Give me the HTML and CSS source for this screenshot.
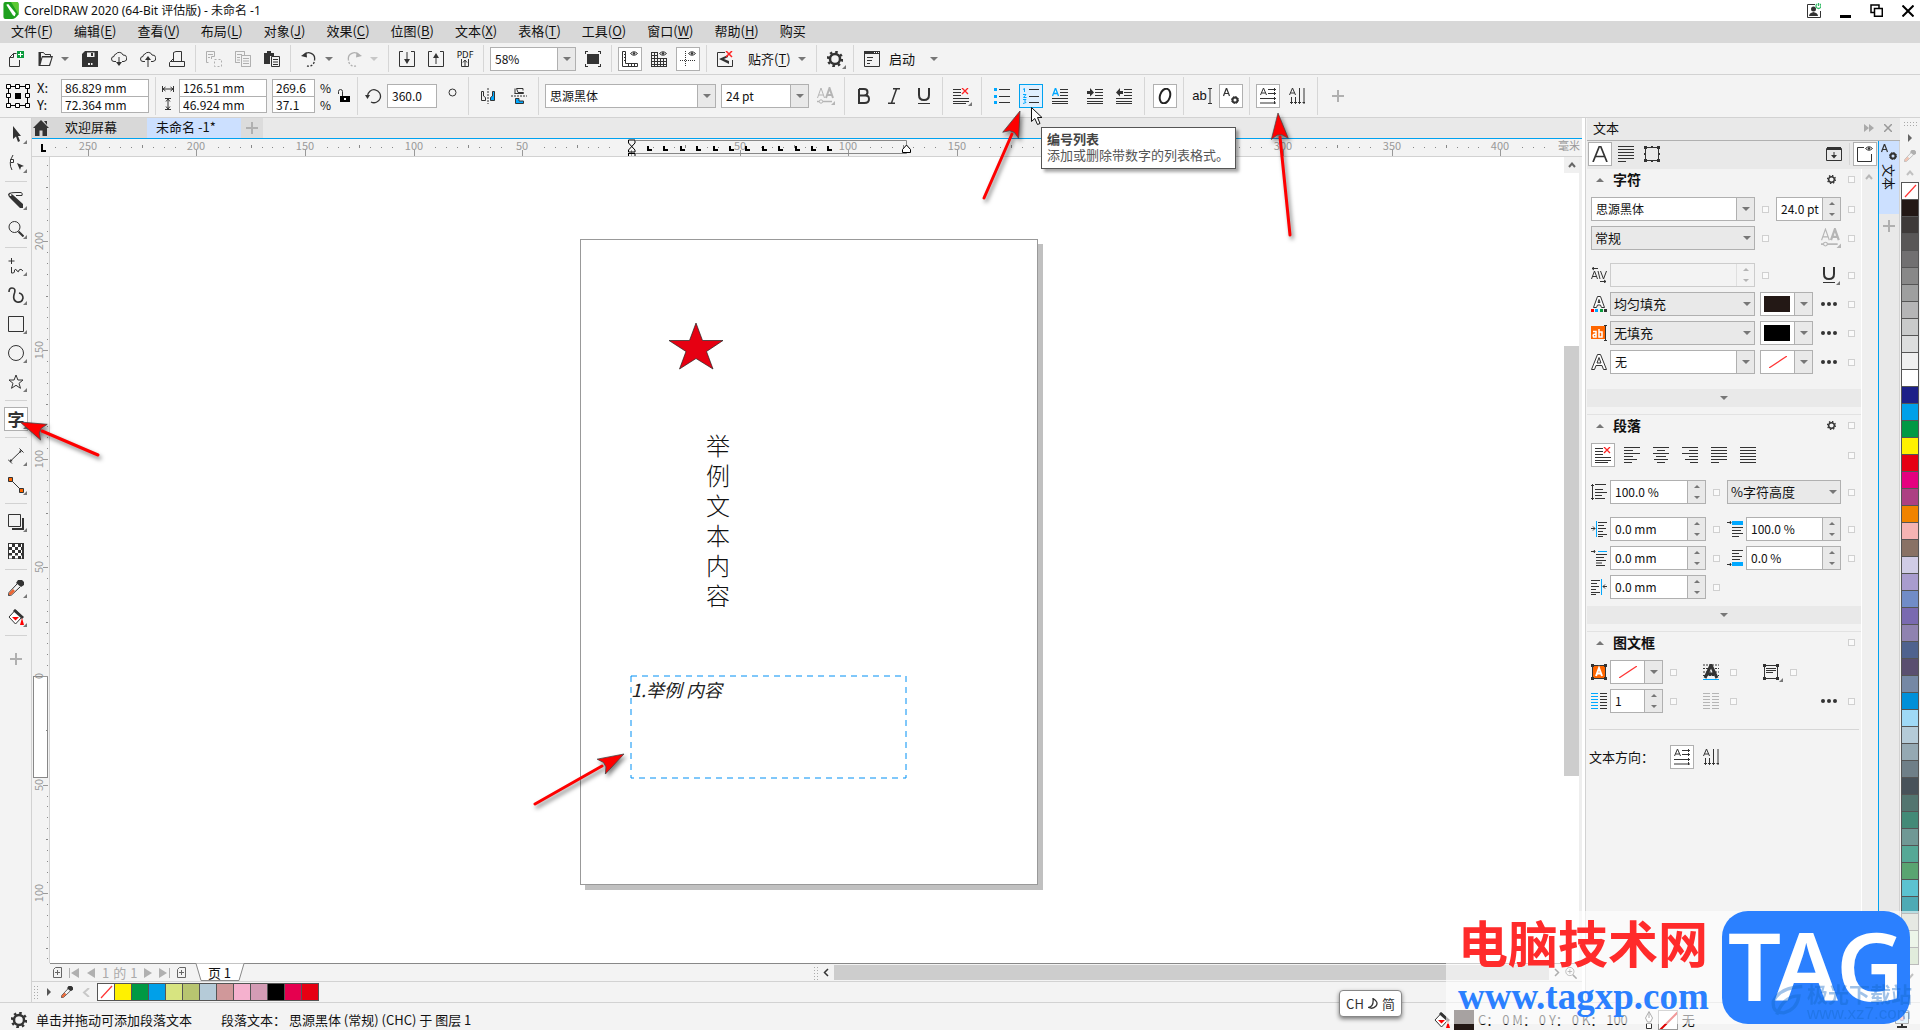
FILE: index.html
```html
<!DOCTYPE html>
<html lang="zh-CN">
<head>
<meta charset="utf-8">
<title>CorelDRAW 2020 (64-Bit 评估版) - 未命名 -1</title>
<link rel="stylesheet" href="styles.css">
</head>
<body>
<svg class="defs" aria-hidden="true">
  <symbol id="new" viewBox="0 0 16 16"><path class="s" d="M8.500 2.500H5.500L1.500 6.500V15.500H11.500V9M5.500 2.500V6.500H1.500"/><path fill="#0a9b3d" d="M9 0h7v7H9z"/><path stroke="#fff" d="M12.500 1v5M10 3.500h5"/></symbol>
  <symbol id="open" viewBox="0 0 16 16"><path class="s" d="M2.500 13V1.500H6.500L8 3.500H13.500V6"/><path class="f" d="M5 5h11l-3 10H1.500z"/><path fill="#f3f3f3" d="M5.500 6.500h9L12 14H3.500z"/><path class="f" d="M1.500 1H4v9l-2.500 5z"/></symbol>
  <symbol id="save" viewBox="0 0 16 16"><path class="f" d="M3 0h13v16H0V3z"/><path fill="#f3f3f3" d="M5 1.500h7.500V6H5zM6 12h4.500v2H6z"/><path class="f" d="M9 2h2v3H9zM8 12h1v2H8z"/></symbol>
  <symbol id="cloud" viewBox="0 0 16 16"><path class="s" d="M5 10.500H3A2.500 2.500 0 0 1 3 5.500 A2.500 2.500 0 0 1 5 3 A4 4 0 0 1 12 4 A3.200 3.200 0 0 1 13 10.500H11"/></symbol>
  <symbol id="print" viewBox="0 0 16 16"><path class="s" d="M4.500 10.500V1.500L7 .5H12.500V10.500M4.500 7.500L.5 11.500V15.500H15.500V10.500H4.500M2 10.500H5"/></symbol>
  <symbol id="cut" viewBox="0 0 16 16"><g opacity=".35"><path class="s" d="M2.500 11.500H.5V.5H8.500V5.500H5.500V8M2 3.500H7M2 6.500H4"/><path class="s" stroke-dasharray="2 2" d="M8.500 8.500H15.500V15.500H8.500z"/></g></symbol>
  <symbol id="copy" viewBox="0 0 16 16"><g opacity=".35"><path class="s" d="M5 11.500H.5V.5H9.500V4M2 3.500H7M2 6.500H5M2 9H5M6.500 4.500H15.500V15.500H6.500zM8 7.500H14M8 10H14M8 12.500H14"/></g></symbol>
  <symbol id="paste" viewBox="0 0 16 16"><path class="f" d="M0 2h3V0h4v2h3v3H6v8H0z"/><path class="s" d="M7.500 5.500H15.500V15.500H7.500zM9 8.500H14M9 11H14M9 13.500H14"/></symbol>
  <symbol id="undo" viewBox="0 0 16 16"><path class="s" stroke-width="1.300" d="M3 4A6 6 0 0 1 13.500 9"/><path class="f" d="M0 5l5.500-4 .5 5.500z"/><path class="s" stroke-width="1.300" stroke-dasharray="2 1.500" d="M6 15A6 6 0 0 0 13.500 9"/></symbol>
  <symbol id="import" viewBox="0 0 16 16"><path class="s" d="M4 .5H.5V15.500H15.500V.5H12M8 1V11"/><path class="f" d="M5 8h6l-3 5z"/></symbol>
  <symbol id="export" viewBox="0 0 16 16"><path class="s" d="M4 .5H.5V15.500H15.500V.5H12M8 4V13"/><path class="f" d="M5 7h6L8 2z"/></symbol>
  <symbol id="full" viewBox="0 0 16 16"><path class="f" d="M2 3h12v10H2z"/><path class="s" d="M0 .5H3M13 .5H16M0 15.500H3M13 15.500H16M.5 0V3M15.500 0V3M.5 13V16M15.500 13V16"/></symbol>
  <symbol id="eye" viewBox="0 0 16 16"><path class="s" d="M8.500 2.500Q12 -1 15.500 2.500Q12 6 8.500 2.500z"/><circle class="f" cx="12" cy="2.500" r="1.300"/></symbol>
  <symbol id="rulers" viewBox="0 0 16 16"><path class="s" d="M.5 .5H3.500V12.500H15.500V15.500H.5zM2 3.500H3M2 6.500H3M2 9.500H3M6.500 13V15M9.500 13V15M12.500 13V15"/><use href="#eye"/></symbol>
  <symbol id="grid" viewBox="0 0 16 16"><path class="s" d="M.5 1V16M3.500 1V16M6.500 1V16M9.500 7V16M12.500 7V16M15.500 7V16M0 1.500H7M0 4.500H7M0 7.500H16M0 10.500H16M0 13.500H16M0 15.500H16"/><use href="#eye"/></symbol>
  <symbol id="guides" viewBox="0 0 16 16"><path class="s" stroke-dasharray="1 1" d="M0 9.500H16M5.500 0V16"/><use href="#eye"/></symbol>
  <symbol id="snap" viewBox="0 0 16 16"><path class="s" d="M8 1.500H.5V15.500H15.500V9"/><path class="f" d="M2 8l9-4v2L7 8l5 2v3z"/><path stroke="#f22" d="M9 0l6 6M15 0L9 6" stroke-width="1.500"/></symbol>
  <symbol id="gear" viewBox="0 0 16 16"><circle cx="8" cy="8" r="5" fill="none" stroke="#333" stroke-width="2.500"/><circle cx="8" cy="8" r="7" fill="none" stroke="#333" stroke-width="2.500" stroke-dasharray="2.500 3"/></symbol>
  <symbol id="launch" viewBox="0 0 16 16"><path class="s" d="M.5 .5H15.500V15.500H.5zM3 6.500H9M3 9.500H8M3 12.500H6"/><path class="f" d="M0 0h16v3H0z"/><path stroke="#fff" stroke-dasharray="1 1" d="M10 1.500H15"/></symbol>
  <symbol id="anchor" viewBox="0 0 24 24"><path fill="none" stroke="#000" d="M2.500 2.500H21.500V21.500H2.500z"/><path fill="#fff" stroke="#000" d="M.5 .5h4v4h-4zM9.500 .5h4v4h-4zM19.500 .5h4v4h-4zM.5 9.500h4v4h-4zM19.500 9.500h4v4h-4zM.5 19.500h4v4h-4zM9.500 19.500h4v4h-4zM19.500 19.500h4v4h-4z"/><path d="M9 9h6v6H9z"/></symbol>
  <symbol id="wid" viewBox="0 0 12 12"><path class="s" d="M.5 3V9M11.500 3V9M1 6H11M3.500 4L1 6l2.500 2M8.500 4L11 6 8.500 8"/></symbol>
  <symbol id="hei" viewBox="0 0 12 12"><path class="s" d="M3 .5H9M3 11.500H9M6 1V11M4 3.500L6 1l2 2.500M4 8.500L6 11l2-2.500"/></symbol>
  <symbol id="lock" viewBox="0 0 12 14"><path class="s" d="M.5 5V2.500Q.5 .5 2.500 .5T4.500 2.500V7"/><path fill="#000" d="M2 7h10v6H2z"/><path fill="#fff" d="M6 9h2v2H6z"/></symbol>
  <symbol id="rot" viewBox="0 0 16 16"><path class="s" stroke-width="1.300" d="M2.500 8A6.500 6.500 0 1 1 6 14"/><path class="f" d="M0 7h5L2.500 11z"/></symbol>
  <symbol id="mirh" viewBox="0 0 16 16"><path class="s" d="M1.500 3.500V12.500H5.500V9.500L3.500 8V3.500z"/><path class="s" stroke-dasharray="2 1" d="M8 0V16"/><path fill="#00a8ff" stroke="#333" d="M14.500 3.500V12.500H10.500V9.500L12.500 8V3.500z"/></symbol>
  <symbol id="mirv" viewBox="0 0 16 16"><path class="s" d="M3.500 5.500H12.500V4.500H7L5.500 .5H12V2.500M4 .5V5.500"/><path class="s" stroke-dasharray="2 1" d="M0 8H16"/><path fill="#00a8ff" stroke="#333" d="M4.500 10.500H8V13H12.500V15.500H4.500z"/></symbol>
  <symbol id="aa" viewBox="0 0 18 18"><g fill="none" stroke="#b5b5b5"><path d="M.5 11L4 1l3.500 10M2 8H6"/><path stroke-width="2" d="M9 11L12.500 1 16 11M10 8H15"/><path stroke-width="1.500" d="M0 14.500H15"/><circle cx="4" cy="14.500" r="1.700" fill="#f3f3f3"/></g><path fill="#b5b5b5" d="M18 14v4h-4z"/></symbol>
  <symbol id="bold" viewBox="0 0 16 16"><path fill="none" stroke="#333" stroke-width="2" d="M3 1V15H8.500Q13 15 13 11T8.500 7.500H3M3 1H8Q11.500 1 11.500 4.200T8 7.500"/></symbol>
  <symbol id="ital" viewBox="0 0 16 16"><path class="s" stroke-width="1.500" d="M7 .7H14M2 15.300H9M10.500 1L5.500 15"/></symbol>
  <symbol id="under" viewBox="0 0 16 16"><path fill="none" stroke="#333" stroke-width="2" d="M3 0V7Q3 12 8 12T13 7V0"/><path class="s" d="M2 15.500H14"/></symbol>
  <symbol id="just" viewBox="0 0 16 16"><path class="s" d="M0 .5H16M0 3.500H16M0 6.500H16M0 9.500H16M0 12.500H16M0 15.500H8"/></symbol>
  <symbol id="full5" viewBox="0 0 16 16"><path class="s" d="M0 .5H16M0 3.500H16M0 6.500H16M0 9.500H16M0 12.500H16M0 15.500H16"/></symbol>
  <symbol id="nojust" viewBox="0 0 16 16"><path class="s" d="M0 1.500H8M0 4.500H8M0 7.500H8M0 10.500H16M0 13.500H16M0 15.500H13"/><path stroke="#f22" d="M9 0l6 6M15 0L9 6" stroke-width="1.300"/></symbol>
  <symbol id="left" viewBox="0 0 16 16"><path class="s" d="M0 .5H16M0 3.500H9M0 6.500H16M0 9.500H9M0 12.500H13M0 15.500H8"/></symbol>
  <symbol id="center" viewBox="0 0 16 16"><path class="s" d="M0 .5H16M4 3.500H12M0 6.500H16M3 9.500H13M1 12.500H15M4 15.500H12"/></symbol>
  <symbol id="right" viewBox="0 0 16 16"><path class="s" d="M0 .5H16M7 3.500H16M0 6.500H16M7 9.500H16M3 12.500H16M8 15.500H16"/></symbol>
  <symbol id="bul" viewBox="0 0 16 16"><path fill="#00a8ff" d="M0 0h3v3H0zM0 7h3v3H0zM0 13h3v3H0z"/><path class="s" d="M5 1.500H16M5 8.500H16M5 14.500H16"/></symbol>
  <symbol id="num" viewBox="0 0 16 16"><path fill="none" stroke="#00a8ff" d="M0 1.500L1.500 .5V4M0 6.500H3L.5 9.500H3.500M0 11.500H3L1.500 13L3 14.500L0 15.500"/><path class="s" d="M6 1.500H16M6 8.500H16M6 14.500H16"/></symbol>
  <symbol id="cap" viewBox="0 0 16 16"><path fill="none" stroke="#00a8ff" stroke-width="1.300" d="M.5 8L3.500 0l3 8M1.500 5.500H5.500"/><path class="s" d="M8 1.500H16M8 4.500H16M8 7.500H16M0 10.500H16M0 13.500H16M0 15.500H16"/></symbol>
  <symbol id="ind" viewBox="0 0 16 16"><path class="s" d="M8 1.500H16M8 4.500H16M8 7.500H16M0 10.500H16M0 13.500H16M0 15.500H16"/><path class="f" d="M0 3h3V0l4 4.500L3 8.500V6H0z"/></symbol>
  <symbol id="out" viewBox="0 0 16 16"><path class="s" d="M8 1.500H16M8 4.500H16M8 7.500H16M0 10.500H16M0 13.500H16M0 15.500H16"/><path class="f" d="M7 3H4V0L0 4.500L4 8.500V6h3z"/></symbol>
  <symbol id="ot" viewBox="0 0 16 16"><ellipse cx="8" cy="8" rx="5" ry="7.500" transform="rotate(18 8 8)" fill="none" stroke="#222" stroke-width="2"/></symbol>
  <symbol id="ibeam" viewBox="0 0 4 16"><path class="s" d="M0 .5H4M0 15.500H4M2 0V16"/></symbol>
  <symbol id="agear" viewBox="0 0 16 16"><path class="s" stroke-width="1.200" d="M.5 8L3.500 0l3 8M1.500 5.500H5.500"/><circle cx="12" cy="12" r="2.500" fill="none" stroke="#333" stroke-width="2"/><circle cx="12" cy="12" r="3.500" fill="none" stroke="#333" stroke-dasharray="1.400 1.350"/></symbol>
  <symbol id="hor" viewBox="0 0 16 16"><path class="s" d="M.5 7L3.500 0l3 7M1.500 5H5.500M8 1.500H16M8 5.500H16M0 10.500H16M0 15H16M14.500 0V3M14.500 4V7M14.500 9V12M14.500 13V16"/></symbol>
  <symbol id="ver" viewBox="0 0 16 16"><path class="s" d="M.5 7L3.500 0l3 7M1.500 5H5.500M2.500 9V16M6.500 9V16M10.500 0V16M15 0V16M1 14.500H4M5 14.500H8M9 14.500H12M13.500 14.500H16"/></symbol>
  <symbol id="plus" viewBox="0 0 12 12"><path fill="none" stroke="#b0b0b0" stroke-width="2" d="M6 0V12M0 6H12"/></symbol>
  <symbol id="pick" viewBox="0 0 16 16"><path class="f" d="M5 0V13L8 10.500L10 16L12 15L10 10H13z"/></symbol>
  <symbol id="shape" viewBox="0 0 16 16"><path class="s" d="M5 0Q0 8 4 15"/><path fill="#fff" stroke="#333" d="M2.500 4.500h3v3h-3z"/><path class="f" d="M9 8l7 3-3 1-1 3z"/></symbol>
  <symbol id="knife" viewBox="0 0 16 16"><path class="s" d="M1 1.500Q3 .5 8 .5H13Q15 1 14 3.500H8"/><path class="f" d="M0 2Q2 0 5 3L15 12V16H12L2 6Q0 4 0 2z"/><circle cx="2.500" cy="3" r="1" fill="#fff"/></symbol>
  <symbol id="zoom" viewBox="0 0 16 16"><circle class="s" cx="6.500" cy="6" r="5.500"/><path class="s" stroke-width="2" d="M10.500 10.500L15.500 15.500"/></symbol>
  <symbol id="free" viewBox="0 0 16 16"><path class="s" d="M3.500 0V6M.5 3H6.500M3.500 9V15H5Q7 15 6.500 12Q8 10 9 13Q11 15 11 12Q13 10 15 13"/></symbol>
  <symbol id="art" viewBox="0 0 16 16"><path fill="none" stroke="#333" stroke-width="1.600" d="M1 5Q1 1 4 1Q8 1 6.500 6Q4 13 9 15Q14 16 15 11Q15 7 11 6"/></symbol>
  <symbol id="rect" viewBox="0 0 16 16"><path class="s" d="M.5 .5h15v15H.5z"/></symbol>
  <symbol id="ell" viewBox="0 0 16 16"><circle class="s" cx="8" cy="8" r="7.500"/></symbol>
  <symbol id="star" viewBox="0 0 16 16"><path class="s" d="M8 1l1.900 5H15l-4 3.300 1.500 5L8 11.300 3.500 14.300 5 9.300 1 6H6.100z"/></symbol>
  <symbol id="dim" viewBox="0 0 16 16"><path class="s" d="M2 13.500L13.500 2.500M0 11.500L4 15.500M11.500 .5L15.500 4.500"/><path class="f" d="M2 14l.5-3 2 2zM13.500 2l-.5 3-2-2z"/></symbol>
  <symbol id="conn" viewBox="0 0 16 16"><path class="s" d="M3 3L13 13"/><path fill="#f60" stroke="#333" d="M.5 .5h4v4h-4zM11.500 11.500h4v4h-4z"/></symbol>
  <symbol id="shad" viewBox="0 0 16 16"><path class="s" d="M.5 .5h12v12H.5z"/><path class="s" stroke-width="2" d="M15 4V15H4"/></symbol>
  <symbol id="trans" viewBox="0 0 16 16"><path class="f" d="M0 0h16v16H0z"/><path fill="none" stroke="#fff" stroke-width="3" stroke-dasharray="3 3" d="M1 2.500H14M1 8.500H14M1 14H14"/><path fill="none" stroke="#fff" stroke-width="3" stroke-dasharray="3 3" d="M4 5.500H15M4 11.500H15"/></symbol>
  <symbol id="drop" viewBox="0 0 16 16"><path d="M10 0h4l2 2v3l-3 2-5-4z" class="f"/><path class="s" d="M9 4L1 12.500 .5 15.500 3.500 15 12 7"/><path fill="#e63" d="M1 13l4-4 2 2-4 4H1z"/></symbol>
  <symbol id="fill" viewBox="0 0 16 16"><path fill="#fff" stroke="#333" d="M7.500 1L1 8l6.500 7L14 8z"/><path class="s" stroke-width="3" d="M6 1L15 9"/><path fill="red" d="M4 8h7l-3.500 3.500zM14 9l2 7h-4z"/></symbol>
  <symbol id="home" viewBox="0 0 16 16"><path class="f" d="M8 0l8 8h-2v8H9.500V10.500H6.500V16H2V8H0zM11 1h3v4z"/></symbol>
  <symbol id="bigA" viewBox="0 0 16 16"><path fill="none" stroke="#333" stroke-width="1.700" d="M1 16L7.300 .5h1.400L15 16M3.500 10.500H12.500"/></symbol>
  <symbol id="frame" viewBox="0 0 16 16"><path class="s" d="M1.500 1.500h13v13h-13z"/><path class="f" d="M0 0h3v3H0zM13 0h3v3h-3zM0 13h3v3H0zM13 13h3v3h-3zM7 0h2v2H7zM0 7h2v2H0zM14 7h2v2h-2zM7 14h2v2H7z"/></symbol>
  <symbol id="box" viewBox="0 0 16 16"><path class="s" d="M.5 2.500H15.500V14.500H.5zM8 6V10"/><path class="f" d="M1 1h14v3H1zM5 9h6l-3 3.500z"/></symbol>
  <symbol id="boxeye" viewBox="0 0 16 16"><path class="s" d="M7 1.500H.5V15.500H14.500V8"/><use href="#eye"/></symbol>
  <symbol id="kern" viewBox="0 0 16 16"><path class="s" d="M.5 12L3.500 4l3 8M1.500 9.500H5.500M7 4L9 12M9.500 4l3 8 3-8M1 1.500H7M3 0L1 1.500 3 3M9 14.500H15M13 13l2 1.500-2 1.500"/></symbol>
  <symbol id="afill" viewBox="0 0 16 16"><path fill="#fff" stroke="#333" d="M2.500 11.500L6.500 .5H9.500L13.500 11.500H10.500L9.500 9H6.500L5.500 11.500zM7 6.500H9L8 3.500z"/><path fill="red" d="M0 13h3v3H0z"/><path fill="#00a8ff" d="M4 13h3v3H4z"/><path fill="#0a9b3d" d="M9 13h3v3H9z"/><path class="f" d="M13 13h3v3h-3z"/></symbol>
  <symbol id="aout" viewBox="0 0 16 16"><path fill="#fff" stroke="#333" d="M.5 15.500L6.500 .5H9.500L15.500 15.500H12.500L11 11.500H5L3.500 15.500zM6 9H10L8 3.500z"/></symbol>
  <symbol id="abk" viewBox="0 0 16 16"><path fill="#f60" d="M0 1h14v13H0z"/><path fill="none" stroke="#fff" stroke-width="1.500" d="M2 6.500H5V12H2.500Q1 9 5 9M8 4V12H11V7H8"/><path class="s" d="M13 .5H16M14.500 0V16M13 15.500H16"/></symbol>
  <symbol id="lsp" viewBox="0 0 16 16"><path class="s" d="M1.500 0V16M0 2L1.500 .5 3 2M0 14L1.500 15.500 3 14M4 .5H15M4 5.500H12M4 8.500H16M4 11.500H11M4 14.500H14"/></symbol>
  <symbol id="i1" viewBox="0 0 16 16"><path class="s" d="M0 7.500H4M2 5.500L4 7.500 2 9.500M7 1.500H16M7 4.500H13M7 7.500H15M7 10.500H12M7 13.500H16M7 15.500H12"/><path stroke="#00a8ff" d="M5.500 0V16"/></symbol>
  <symbol id="i2" viewBox="0 0 16 16"><path class="s" d="M0 1.500H4M3 0L4 1.500 3 3M5 4.500H16M5 7.500H13M5 10.500H15M5 13H11M5 15.500H14"/><path stroke="#00a8ff" d="M7 1.500H16"/></symbol>
  <symbol id="i3" viewBox="0 0 16 16"><path class="s" d="M12 7.500H16M14 5.500L12 7.500 14 9.500M0 1.500H9M0 4.500H6M0 7.500H8M0 10.500H5M0 13.500H9M0 15.500H5"/><path stroke="#00a8ff" d="M10.500 0V16"/></symbol>
  <symbol id="sb" viewBox="0 0 16 16"><path class="s" d="M0 1.500H4M3 0L4 1.500 3 3M5 6.500H16M5 9.500H14M5 12.500H16M5 15.500H12"/><path fill="#00a8ff" d="M5 0h11v4H5z"/></symbol>
  <symbol id="sa" viewBox="0 0 16 16"><path class="s" d="M0 14.500H4M3 13L4 14.500 3 16M5 .5H16M5 3.500H12M5 6.500H15M5 9.500H13"/><path fill="#00a8ff" d="M5 12h11v4H5z"/></symbol>
  <symbol id="fc" viewBox="0 0 16 16"><path fill="#f60" stroke="#333" d="M1.500 1.500h13v13h-13z"/><path class="f" d="M0 0h3v3H0zM13 0h3v3h-3zM0 13h3v3H0zM13 13h3v3h-3z"/><path fill="none" stroke="#fff" stroke-width="2" d="M5 12L8 4l3 8M6 9.500H10"/></symbol>
  <symbol id="base" viewBox="0 0 16 16"><path class="s" stroke-dasharray="2 1" d="M0 1H16M0 4.500H16M0 8H16M0 11.500H16"/><path fill="none" stroke="#333" stroke-width="3" d="M2 14L8 1l6 13M4.500 10H11.500"/><path stroke="#00a8ff" d="M0 15.500H16"/></symbol>
  <symbol id="valign" viewBox="0 0 20 20"><path class="s" d="M1.500 3.500h13v13h-13zM3 6.500H13M3 8.500H13M3 10.500H10"/><path class="f" d="M0 2h3v3H0zM13 2h3v3h-3zM0 15h3v3H0zM13 15h3v3h-3z"/><path fill="#777" d="M20 16v4h-4z"/></symbol>
  <symbol id="cols" viewBox="0 0 16 16"><path stroke="#00a8ff" d="M0 .5H7M0 3.500H7M0 6.500H7M0 9.500H7M0 12.500H7M0 15.500H7"/><path class="s" d="M9 .5H16M9 3.500H16M9 6.500H16M9 9.500H16M9 12.500H16M9 15.500H16"/></symbol>
  <symbol id="colg" viewBox="0 0 16 16"><path stroke="#b5b5b5" d="M0 .5H7M0 3.500H7M0 6.500H7M0 9.500H7M0 12.500H7M0 15.500H7M9 .5H16M9 3.500H16M9 6.500H16M9 9.500H16M9 12.500H16M9 15.500H16"/></symbol>
  <symbol id="dots" viewBox="0 0 16 4"><circle class="f" cx="2" cy="2" r="2"/><circle class="f" cx="8" cy="2" r="2"/><circle class="f" cx="14" cy="2" r="2"/></symbol>
  <symbol id="none" viewBox="0 0 18 12"><path stroke="#f33" stroke-width="1.200" d="M0 12L18 0"/></symbol>
  <symbol id="addpg" viewBox="0 0 9 11"><path fill="none" stroke="#666" d="M2.500 .5H8.500V10.500H.5V2.500zM4.500 3V8M2 5.500H7"/></symbol>
  <symbol id="up" viewBox="0 0 8 6"><path fill="none" stroke="#666" stroke-width="2" d="M1 5L4 1.500 7 5"/></symbol>
  <symbol id="pen" viewBox="0 0 10 18"><path fill="#fff" stroke="#333" d="M5 .5L1.500 7 3.500 11H6.500L8.500 7zM5 2V7M2.500 12.500h5v5h-5z"/></symbol>
</svg>

<header class="titlebar">
  <svg class="logo" viewBox="0 0 16 18"><path fill="#1ea01e" d="M0 2Q0 0 2 0H14Q16 0 16 2V13Q13 18 9 18H2Q0 18 0 16z"/><path fill="#5cc832" d="M8 0h6q2 0 2 2v11z"/><path fill="#fff" d="M3 3l2-1 8 10-1 3-2-1z"/></svg>
  <h1>CorelDRAW 2020 (64-Bit 评估版) - 未命名 -1</h1>
  <div class="wincontrols">
    <button aria-label="账户"><svg width="14" height="15" viewBox="0 0 14 15"><path class="s" d="M8 1.500H.5V14.500H13.500V8"/><circle class="f" cx="6.500" cy="6" r="2.500"/><path class="f" d="M2 13q0-3 4.500-4Q11 10 11 13z"/><path fill="none" stroke="#3b6" stroke-width="1.300" d="M10 1A2.500 2.500 0 1 0 13 1M11.500 0V3"/></svg></button>
    <button aria-label="最小化"><svg width="11" height="14"><path d="M0 11h11v3H0z"/></svg></button>
    <button aria-label="还原"><svg width="13" height="13" viewBox="0 0 13 13"><path fill="none" stroke="#000" stroke-width="1.500" d="M4 8.500H1V1H9V4M4.500 4.500H12.300V12.300H4.500z"/></svg></button>
    <button aria-label="关闭"><svg width="12" height="12" viewBox="0 0 12 12"><path stroke="#000" stroke-width="2" d="M.5 .5l11 11M11.500 .5L.5 11.500"/></svg></button>
  </div>
</header>

<nav class="menubar">
  <button>文件(<u>F</u>)</button><button>编辑(<u>E</u>)</button><button>查看(<u>V</u>)</button><button>布局(<u>L</u>)</button><button>对象(<u>J</u>)</button><button>效果(<u>C</u>)</button><button>位图(<u>B</u>)</button><button>文本(<u>X</u>)</button><button>表格(<u>T</u>)</button><button>工具(<u>O</u>)</button><button>窗口(<u>W</u>)</button><button>帮助(<u>H</u>)</button><button>购买</button>
</nav>

<div class="toolbar">
  <button class="tb" aria-label="新建"><svg class="ic"><use href="#new"/></svg></button>
  <div class="split"><button class="tb" aria-label="打开"><svg class="ic"><use href="#open"/></svg></button><button class="dd" aria-label="更多"></button></div>
  <button class="tb" aria-label="保存"><svg class="ic"><use href="#save"/></svg></button>
  <button class="tb" aria-label="从云下载"><svg class="ic" viewBox="0 0 16 16"><use href="#cloud"/><path class="s" d="M8 6V14"/><path class="f" d="M5 11h6l-3 4z"/></svg></button>
  <button class="tb" aria-label="上传到云"><svg class="ic" viewBox="0 0 16 16"><use href="#cloud"/><path class="s" d="M8 8V16"/><path class="f" d="M5 9h6L8 5z"/></svg></button>
  <button class="tb" aria-label="打印"><svg class="ic"><use href="#print"/></svg></button>
  <i class="sep"></i>
  <button class="tb" aria-label="剪切"><svg class="ic"><use href="#cut"/></svg></button>
  <button class="tb" aria-label="复制"><svg class="ic"><use href="#copy"/></svg></button>
  <button class="tb" aria-label="粘贴"><svg class="ic"><use href="#paste"/></svg></button>
  <i class="sep"></i>
  <div class="split"><button class="tb" aria-label="撤消"><svg class="ic"><use href="#undo"/></svg></button><button class="dd" aria-label="更多"></button></div>
  <div class="split faded"><button class="tb flip" aria-label="重做"><svg class="ic"><use href="#undo"/></svg></button><button class="dd" aria-label="更多"></button></div>
  <i class="sep"></i>
  <button class="tb" aria-label="导入"><svg class="ic"><use href="#import"/></svg></button>
  <button class="tb" aria-label="导出"><svg class="ic"><use href="#export"/></svg></button>
  <button class="tb pdf"><span>PDF</span><svg width="8" height="8" viewBox="0 0 8 8"><path class="s" d="M.5 0V7.500H7.500V0M4 2V7M2 3.500L4 1l2 2.500"/></svg></button>
  <i class="sep"></i>
  <div class="combo w86"><input aria-label="缩放级别" value="58%"><button aria-label="展开"></button></div>
  <button class="tb" aria-label="全屏预览"><svg class="ic"><use href="#full"/></svg></button>
  <i class="sep"></i>
  <button class="tb on" aria-label="显示标尺"><svg class="ic"><use href="#rulers"/></svg></button>
  <button class="tb" aria-label="显示网格"><svg class="ic"><use href="#grid"/></svg></button>
  <button class="tb on" aria-label="显示辅助线"><svg class="ic"><use href="#guides"/></svg></button>
  <i class="sep"></i>
  <button class="tb" aria-label="关闭贴齐"><svg class="ic"><use href="#snap"/></svg></button>
  <div class="split"><button class="txt snaplabel">贴齐(<u>T</u>)</button><button class="dd" aria-label="更多"></button></div>
  <i class="sep"></i>
  <button class="tb fly" aria-label="选项"><svg class="ic"><use href="#gear"/></svg></button>
  <i class="sep"></i>
  <button class="tb" aria-label="应用程序"><svg class="ic"><use href="#launch"/></svg></button>
  <div class="split"><button class="txt w37">启动</button><button class="dd" aria-label="更多"></button></div>
</div>

<div class="toolbar props">
  <svg class="anchor"><use href="#anchor"/></svg>
  <div class="labels"><label for="px">X:</label><label for="py">Y:</label></div>
  <div class="pair w88"><input id="px" value="86.829 mm"><input id="py" value="72.364 mm"></div>
  <i class="sep"></i>
  <div class="labels w12"><svg width="12" height="12"><use href="#wid"/></svg><svg width="12" height="12"><use href="#hei"/></svg></div>
  <div class="pair w88"><input aria-label="宽度" value="126.51 mm"><input aria-label="高度" value="46.924 mm"></div>
  <div class="pair w43"><input aria-label="水平缩放" value="269.6"><input aria-label="垂直缩放" value="37.1"></div>
  <div class="labels w12 pct"><span>%</span><span>%</span></div>
  <button class="tb w14" aria-label="锁定比率"><svg width="12" height="14"><use href="#lock"/></svg></button>
  <i class="sep"></i>
  <svg class="w18 ic"><use href="#rot"/></svg>
  <div class="combo w50"><input aria-label="旋转角度" value="360.0"></div>
  <span class="degree"><svg width="9" height="9" viewBox="0 0 9 9"><circle class="s" cx="4.500" cy="4.500" r="3.500"/></svg></span>
  <i class="sep"></i>
  <button class="tb w26" aria-label="水平镜像"><svg class="ic"><use href="#mirh"/></svg></button>
  <button class="tb w26" aria-label="垂直镜像"><svg class="ic"><use href="#mirv"/></svg></button>
  <i class="sep"></i>
  <div class="combo w171"><input aria-label="字体" value="思源黑体"><button aria-label="展开"></button></div>
  <div class="combo w88"><input aria-label="字号" value="24 pt"><button aria-label="展开"></button></div>
  <button class="tb" aria-label="可变字体"><svg width="18" height="18"><use href="#aa"/></svg></button>
  <i class="sep"></i>
  <button class="tb w25" aria-label="粗体"><svg class="ic"><use href="#bold"/></svg></button>
  <button class="tb w25" aria-label="斜体"><svg class="ic"><use href="#ital"/></svg></button>
  <button class="tb w25" aria-label="下划线"><svg class="ic"><use href="#under"/></svg></button>
  <i class="sep"></i>
  <button class="tb fly" aria-label="文本对齐"><svg class="ic"><use href="#nojust"/></svg></button>
  <i class="sep wide"></i>
  <button class="tb" aria-label="项目符号列表"><svg class="ic"><use href="#bul"/></svg></button>
  <div class="tipped">
    <button class="tb hot" aria-describedby="tip" aria-label="编号列表"><svg class="ic"><use href="#num"/></svg></button>
    <div class="tooltip" id="tip" role="tooltip"><b>编号列表</b><span>添加或删除带数字的列表格式。</span></div>
    <svg class="cursor" viewBox="0 0 13 19"><path fill="#fff" stroke="#111" d="M.5 .5V14.500L3.800 11.500 6.500 17.500 9 16.500 6.500 10.500H11z"/></svg>
  </div>
  <button class="tb" aria-label="首字下沉"><svg class="ic"><use href="#cap"/></svg></button>
  <div class="group"><button class="tb" aria-label="增加缩进量"><svg class="ic"><use href="#ind"/></svg></button><button class="tb" aria-label="减少缩进量"><svg class="ic"><use href="#out"/></svg></button></div>
  <i class="sep wide"></i>
  <button class="tb on" aria-label="交互式 OpenType"><svg class="ic"><use href="#ot"/></svg></button>
  <i class="sep"></i>
  <button class="tb abt"><span>ab</span><svg width="4" height="16"><use href="#ibeam"/></svg></button>
  <button class="tb on" aria-label="文本属性"><svg class="ic"><use href="#agear"/></svg></button>
  <i class="sep"></i>
  <button class="tb on" aria-label="水平方向"><svg class="ic"><use href="#hor"/></svg></button>
  <button class="tb" aria-label="垂直方向"><svg class="ic"><use href="#ver"/></svg></button>
  <i class="sep wide"></i>
  <button class="tb" aria-label="自定义"><svg width="12" height="12"><use href="#plus"/></svg></button>
</div>

<main class="workspace">
  <aside class="toolbox">
    <button class="tb fly" aria-label="选择"><svg class="ic"><use href="#pick"/></svg></button>
    <button class="tb fly" aria-label="形状"><svg class="ic"><use href="#shape"/></svg></button>
    <i class="rule"></i>
    <button class="tb fly" aria-label="裁剪"><svg class="ic"><use href="#knife"/></svg></button>
    <button class="tb fly" aria-label="缩放"><svg class="ic"><use href="#zoom"/></svg></button>
    <i class="rule"></i>
    <button class="tb fly" aria-label="手绘"><svg class="ic"><use href="#free"/></svg></button>
    <button class="tb fly" aria-label="艺术笔"><svg class="ic"><use href="#art"/></svg></button>
    <button class="tb fly" aria-label="矩形"><svg class="ic"><use href="#rect"/></svg></button>
    <button class="tb fly" aria-label="椭圆形"><svg class="ic"><use href="#ell"/></svg></button>
    <button class="tb fly" aria-label="星形"><svg class="ic"><use href="#star"/></svg></button>
    <i class="rule"></i>
    <button class="tb fly on glyph">字</button>
    <i class="rule"></i>
    <button class="tb fly" aria-label="度量"><svg class="ic"><use href="#dim"/></svg></button>
    <button class="tb fly" aria-label="连接器"><svg class="ic"><use href="#conn"/></svg></button>
    <i class="rule"></i>
    <button class="tb fly" aria-label="阴影"><svg class="ic"><use href="#shad"/></svg></button>
    <button class="tb" aria-label="透明度"><svg class="ic"><use href="#trans"/></svg></button>
    <i class="rule"></i>
    <button class="tb fly" aria-label="滴管"><svg class="ic"><use href="#drop"/></svg></button>
    <button class="tb fly" aria-label="填充"><svg class="ic"><use href="#fill"/></svg></button>
    <i class="rule last"></i>
    <button class="tb" aria-label="添加工具"><svg width="12" height="12"><use href="#plus"/></svg></button>
  </aside>

  <section class="document">
    <div class="tabs">
      <button class="home" aria-label="主页"><svg class="ic"><use href="#home"/></svg></button>
      <button class="tab">欢迎屏幕</button>
      <button class="tab active">未命名 -1*</button>
      <button class="addtab" aria-label="新建文档"><svg width="12" height="12"><use href="#plus"/></svg></button>
    </div>
    <div class="hruler"><svg id="hruler"></svg></div>
    <div class="stage">
      <div class="vruler"><svg id="vruler"></svg></div>
      <div class="canvas">
        <div class="page"></div>
        <svg class="redstar" viewBox="0 0 56 48"><path fill="#e60012" stroke="#222" stroke-width=".7" d="M28 1l6.500 17.500H55L38.500 29.500 45 47 28 36.500 11.500 47 18 29.500 1 18.500H21.500z"/></svg>
        <p class="vtext">举例文本内容</p>
        <div class="textframe"><svg><rect x="0" y="0" width="100%" height="100%"/></svg><p>1.举例 内容</p></div>
      </div>
      <div class="vscroll"><button aria-label="向上"><svg width="8" height="6"><use href="#up"/></svg></button><i></i></div>
    </div>
    <div class="pagenav">
      <div class="pager">
        <button aria-label="添加页面"><svg width="9" height="11"><use href="#addpg"/></svg></button>
        <button aria-label="首页"><svg width="11" height="10"><path fill="#b0b0b0" d="M0 0h1v10H0zM10 0v10L2 5z"/></svg></button>
        <button aria-label="上一页"><svg width="8" height="10"><path fill="#b0b0b0" d="M8 0v10L0 5z"/></svg></button>
        <span class="count"><span>1</span><span>的</span><span>1</span></span>
        <button aria-label="下一页"><svg width="8" height="10"><path fill="#b0b0b0" d="M0 0v10L8 5z"/></svg></button>
        <button aria-label="末页"><svg width="11" height="10"><path fill="#b0b0b0" d="M0 0v10L8 5zM10 0h1v10h-1z"/></svg></button>
        <button aria-label="添加页面"><svg width="9" height="11"><use href="#addpg"/></svg></button>
        <button class="pagetab"><svg viewBox="0 0 48 17"><path fill="#fff" stroke="#888" d="M0 -.5L5 16.500H43L48 -.5"/></svg><span>页 1</span></button>
      </div>
      <div class="hscroll"><b class="grip"></b><svg width="6" height="9"><path fill="none" stroke="#333" stroke-width="1.500" d="M5 1L1.500 4.500 5 8"/></svg><i></i><svg width="6" height="9"><path fill="none" stroke="#333" stroke-width="1.500" d="M1 1l3.500 3.500L1 8"/></svg><svg class="nav" width="12" height="12" viewBox="0 0 16 16"><use href="#zoom"/><path class="s" d="M6.500 3V9M3.500 6H9.500"/></svg></div>
    </div>
    <div class="docpalette">
      <b class="grip"></b>
      <svg width="5" height="8"><path fill="#555" d="M0 0l4 4-4 4z"/></svg>
      <svg width="12" height="12"><use href="#drop"/></svg>
      <svg width="8" height="9"><path fill="none" stroke="#c8c8c8" stroke-width="2" d="M7 0L2 4.500 7 9"/></svg>
      <div class="swatches" id="docswatches"></div>
    </div>
  </section>

  <aside class="docker">
    <h2>文本<span><svg width="10" height="8"><path fill="#aaa" d="M0 0l5 4-5 4zM5 0l5 4-5 4z"/></svg><svg width="8" height="8"><path stroke="#999" stroke-width="1.500" d="M0 0l8 8M8 0L0 8"/></svg></span></h2>
    <div class="dockrow">
      <div class="dockbody">
        <div class="docktabs">
          <button class="tb on" aria-label="字符"><svg class="ic"><use href="#bigA"/></svg></button>
          <button class="tb" aria-label="段落"><svg class="ic"><use href="#just"/></svg></button>
          <button class="tb" aria-label="图文框"><svg class="ic"><use href="#frame"/></svg></button>
          <span class="grow"></span>
          <button class="tb" aria-label="样式"><svg class="ic"><use href="#box"/></svg></button>
          <i class="sep"></i>
          <button class="tb on" aria-label="预览"><svg class="ic"><use href="#boxeye"/></svg></button>
        </div>
        <div class="dockmain">
          <div class="panel">
            <section>
              <h3>字符<span class="grow"></span><svg class="mini"><use href="#gear"/></svg><i class="sq"></i></h3>
              <div class="row"><div class="combo w164"><input aria-label="字体" value="思源黑体"><button aria-label="展开"></button></div><i class="sq"></i><div class="combo spin w65"><input aria-label="字号" value="24.0 pt"><button aria-label="调整"></button></div><i class="sq"></i></div>
              <div class="row tall"><div class="select w164"><select aria-label="样式"><option>常规</option></select></div><i class="sq"></i><span class="grow"></span><svg width="20" height="20"><use href="#aa"/></svg><i class="sq"></i></div>
              <div class="row"><div class="field"><svg class="ic"><use href="#kern"/></svg><div class="combo spin off w145"><input aria-label="字距" disabled><button aria-label="调整" disabled></button></div></div><i class="sq"></i><span class="grow"></span><button class="tb fly" aria-label="下划线"><svg class="ic"><use href="#under"/></svg></button><i class="sq"></i></div>
              <div class="row"><div class="field"><svg class="ic"><use href="#afill"/></svg><div class="select w145"><select aria-label="填充类型"><option>均匀填充</option></select></div><button class="color" aria-label="文本颜色"><i class="ink"></i></button></div><svg class="dots"><use href="#dots"/></svg><i class="sq"></i></div>
              <div class="row"><div class="field"><svg class="ic"><use href="#abk"/></svg><div class="select w145"><select aria-label="背景填充类型"><option>无填充</option></select></div><button class="color" aria-label="背景颜色"><i class="ink black"></i></button></div><svg class="dots"><use href="#dots"/></svg><i class="sq"></i></div>
              <div class="row"><div class="field"><svg class="ic"><use href="#aout"/></svg><div class="combo w145"><input aria-label="轮廓宽度" value="无"><button aria-label="展开"></button></div><button class="color" aria-label="轮廓颜色"><svg width="18" height="12"><use href="#none"/></svg></button></div><svg class="dots"><use href="#dots"/></svg><i class="sq"></i></div>
            </section>
            <button class="more first" aria-label="展开更多"></button>
            <section>
              <h3>段落<span class="grow"></span><svg class="mini"><use href="#gear"/></svg><i class="sq"></i></h3>
              <div class="row aligns"><button class="tb on" aria-label="无"><svg class="ic"><use href="#nojust"/></svg></button><button class="tb" aria-label="左"><svg class="ic"><use href="#left"/></svg></button><button class="tb" aria-label="中"><svg class="ic"><use href="#center"/></svg></button><button class="tb" aria-label="右"><svg class="ic"><use href="#right"/></svg></button><button class="tb" aria-label="两端对齐"><svg class="ic"><use href="#just"/></svg></button><button class="tb" aria-label="强制两端对齐"><svg class="ic"><use href="#full5"/></svg></button><span class="grow"></span><i class="sq"></i></div>
              <div class="row tall"><div class="field"><svg class="ic"><use href="#lsp"/></svg><div class="combo spin w96"><input aria-label="行间距" value="100.0 %"><button aria-label="调整"></button></div></div><i class="sq"></i><div class="select w114"><select aria-label="行距单位"><option>%字符高度</option></select></div><i class="sq"></i></div>
              <div class="row"><div class="field"><svg class="ic"><use href="#i1"/></svg><div class="combo spin w96"><input aria-label="左行缩进" value="0.0 mm"><button aria-label="调整"></button></div></div><i class="sq"></i><div class="field"><svg class="ic"><use href="#sb"/></svg><div class="combo spin w95"><input aria-label="段前间距" value="100.0 %"><button aria-label="调整"></button></div></div><i class="sq"></i></div>
              <div class="row"><div class="field"><svg class="ic"><use href="#i2"/></svg><div class="combo spin w96"><input aria-label="首行缩进" value="0.0 mm"><button aria-label="调整"></button></div></div><i class="sq"></i><div class="field"><svg class="ic"><use href="#sa"/></svg><div class="combo spin w95"><input aria-label="段后间距" value="0.0 %"><button aria-label="调整"></button></div></div><i class="sq"></i></div>
              <div class="row"><div class="field"><svg class="ic"><use href="#i3"/></svg><div class="combo spin w96"><input aria-label="右行缩进" value="0.0 mm"><button aria-label="调整"></button></div></div><i class="sq"></i></div>
            </section>
            <button class="more" aria-label="展开更多"></button>
            <section>
              <h3>图文框<span class="grow"></span><i class="sq"></i></h3>
              <div class="row"><div class="field"><svg class="ic"><use href="#fc"/></svg><button class="color" aria-label="图文框颜色"><svg width="18" height="12"><use href="#none"/></svg></button></div><i class="sq"></i><div class="cell"><svg class="ic"><use href="#base"/></svg></div><i class="sq"></i><div class="cell flush"><svg width="20" height="20"><use href="#valign"/></svg></div><i class="sq"></i></div>
              <div class="row"><div class="field"><svg class="ic"><use href="#cols"/></svg><div class="combo spin w53"><input aria-label="栏数" value="1"><button aria-label="调整"></button></div></div><i class="sq"></i><div class="cell"><svg class="ic"><use href="#colg"/></svg></div><i class="sq"></i><svg class="dots"><use href="#dots"/></svg><i class="sq"></i></div>
            </section>
            <div class="direction"><span>文本方向：</span><button class="tb on" aria-label="水平"><svg class="ic"><use href="#hor"/></svg></button><button class="tb" aria-label="垂直"><svg class="ic"><use href="#ver"/></svg></button></div>
          </div>
          <div class="panelscroll"><svg width="8" height="6" opacity=".4"><use href="#up"/></svg></div>
        </div>
      </div>
      <div class="dockstrip">
        <button class="striptab"><svg class="ic"><use href="#agear"/></svg><span>文本</span></button>
        <button class="tb" aria-label="添加"><svg width="12" height="12"><use href="#plus"/></svg></button>
      </div>
    </div>
  </aside>
  <aside class="palette">
    <b class="grip"></b>
    <svg width="5" height="8"><path fill="#666" d="M0 0l4 4-4 4z"/></svg>
    <svg width="12" height="12" opacity=".35"><use href="#drop"/></svg>
    <svg width="8" height="6" opacity=".35"><use href="#up"/></svg>
    <div class="swatches column" id="swatches"></div>
    <svg class="flipv" width="8" height="6"><use href="#up"/></svg>
  </aside>
</main>

<footer class="status">
  <svg class="ic"><use href="#gear"/></svg>
  <span class="hint">单击并拖动可添加段落文本</span>
  <span>段落文本： 思源黑体 (常规) (CHC) 于 图层 1</span>
  <div class="fillinfo">
    <svg class="ic"><use href="#fill"/></svg><i class="chip"></i><span>C：&nbsp;0 M：&nbsp;0 Y：&nbsp;0 K：&nbsp;100</span>
    <svg class="pen"><use href="#pen"/></svg><i class="chip nofill"><svg width="20" height="20"><path stroke="#d00" stroke-width="2" d="M0 20L20 0"/></svg></i><span>无</span>
    <svg class="monitor" viewBox="0 0 16 16"><path fill="#bfe4fa" stroke="#333" d="M1.500 .5h13v11h-13z"/><circle cx="8" cy="6" r="2.500" fill="#f99" stroke="#66a"/><path class="s" d="M8 12V14M3 15H13" stroke-width="2"/></svg>
  </div>
</footer>

<div class="ime">CH <svg width="10" height="11" viewBox="0 0 10 11"><path fill="none" stroke="#333" stroke-width="1.300" d="M5 .5Q11 4 8 8Q5 11.500 .5 9.500Q6 8.500 5 .5z"/></svg> 简</div>

<div class="watermark">
  <div class="site"><strong>电脑技术网</strong><em>www.tagxp.com</em></div>
  <div class="tag">TAG</div>
  <div class="faint"><svg viewBox="0 0 40 40"><path fill="none" stroke="#1468c8" stroke-width="4" d="M38 3Q12 4 4 20Q2 34 16 34Q32 30 34 14Q16 14 8 36"/></svg><div><b>极光下载站</b><span>www.xz7.com</span></div></div>
</div>

<svg class="arrows" aria-hidden="true">
  <defs><g id="arrow"><path d="M-22 -2.500L-26 -8.500L0 0L-26 8.500L-22 2.500z" fill="#fe0000" stroke="#444" stroke-width=".7"/></g></defs>
  <g><path d="M984 198L1012 134"/><use href="#arrow" transform="translate(1020 111) rotate(-69)"/></g>
  <g><path d="M1290 235L1280 137"/><use href="#arrow" transform="translate(1278 113) rotate(-94)"/></g>
  <g><path d="M98 455L42 431"/><use href="#arrow" transform="translate(20 422) rotate(203)"/></g>
  <g><path d="M535 804L602 766"/><use href="#arrow" transform="translate(624 754) rotate(-29)"/></g>
</svg>
<script src="script.js"></script>
</body>
</html>
```
FILE: styles.css
```css
* { box-sizing: border-box; }
body {
  margin: 0;
  height: 100vh;
  display: flex;
  flex-direction: column;
  overflow: hidden;
  position: relative;
  background: #f3f3f3;
  color: #111;
  font: 13px/16px "Noto Sans CJK SC", sans-serif;
}
button, input, select { font: inherit; color: inherit; border: 0; margin: 0; padding: 0; background: none; border-radius: 0; }
input { min-width: 0; font-size: 12px; outline: 0; }
h1, h2, h3, p { margin: 0; font: inherit; }
svg { display: block; flex: none; }
i, em { font-style: normal; }
.defs { position: absolute; width: 0; height: 0; }
.s { fill: none; stroke: #333; }
.f { fill: #333; }
.ic { width: 16px; height: 16px; }
.grow { flex: 1; }

.titlebar { flex: none; height: 21px; background: #fff; display: flex; align-items: center; padding: 0 6px 0 3px; gap: 5px; }
.titlebar h1 { font: 12px/16px "Noto Sans", "Noto Sans CJK SC", sans-serif; }
.logo { width: 16px; height: 17px; }
.wincontrols { margin-left: auto; display: flex; gap: 19px; align-items: center; }

.menubar { flex: none; height: 22px; background: #d8d8d8; display: flex; }
.menubar button { padding: 0 10px 2px 11px; white-space: nowrap; }
.menubar u, .txt u { text-underline-offset: 2px; }

.toolbar { flex: none; height: 32px; border-bottom: 1px solid #d2d2d2; display: flex; align-items: center; gap: 5px; padding-left: 4px; }
.props { height: 43px; }
.sep { flex: none; width: 3px; align-self: stretch; background: linear-gradient(#d6d6d6, #d6d6d6) center / 1px 100% no-repeat; margin: 2px 0; }
.wide { width: 7px; }
.tb { flex: none; width: 24px; height: 24px; display: flex; align-items: center; justify-content: center; border: 1px solid transparent; position: relative; }
.on { background: #fff; border-color: #b0b0b0; }
.hot { background: #e0f0ff; border-color: #00a2f0; }
.fly::after { content: ""; position: absolute; right: 0; bottom: 1px; border: 2px solid; border-color: transparent #777 #777 transparent; }
.split { display: flex; align-items: center; }
.dd { width: 16px; height: 24px; display: flex; align-items: center; justify-content: center; }
.dd::after, .combo button::after, .select::after, .color::after, .more::after { content: ""; border: 4px solid transparent; border-top: 4px solid #777; border-bottom: 0; }
.faded { opacity: .35; }
.flip svg { transform: scaleX(-1); }
.flipv { transform: scaleY(-1); }
.pdf { flex-direction: column; font: 9px/9px "Noto Sans", sans-serif; }
.txt { text-align: left; white-space: nowrap; }
.snaplabel { width: 52px; padding-left: 6px; }
.group { display: flex; gap: 5px; margin-left: 6px; }
.abt { gap: 1px; font: 13px/16px "Liberation Sans", sans-serif; }

.combo { flex: none; height: 24px; display: flex; border: 1px solid #b0b0b0; background: #fff; }
.combo input { flex: 1; padding-left: 4px; }
.combo button { width: 18px; background: #e9e9e9; border-left: 1px solid #b0b0b0; display: flex; align-items: center; justify-content: center; }
.spin button { flex-direction: column; gap: 8px; }
.spin button::before { content: ""; border: 3px solid transparent; border-bottom: 3px solid #777; border-top: 0; }
.spin button::after { border-width: 3px 3px 0; }
.off, .off input, .off button { background: #f3f3f3; border-color: #ccc; }
.off button { opacity: .5; }
.select { flex: none; height: 24px; position: relative; }
.select select { appearance: none; width: 100%; height: 100%; border: 1px solid #b0b0b0; background: #e9e9e9; padding-left: 3px; }
.select::after { position: absolute; right: 4px; top: 10px; }
.pair { flex: none; display: flex; flex-direction: column; border: 1px solid #b0b0b0; background: #fff; }
.pair input { height: 16px; padding-left: 3px; }
.pair input + input { border-top: 1px solid #b0b0b0; }
.labels { flex: none; width: 19px; display: flex; flex-direction: column; gap: 3px; }
.labels > * { line-height: 14px; }
.anchor { width: 28px; height: 24px; }
.degree { width: 20px; height: 17px; display: flex; justify-content: center; }
.labels.w12, .w12 { width: 12px; }
.pct { font-size: 12px; }
.w14 { width: 14px; } .w18 { width: 18px; } .w25 { width: 25px; } .w26 { width: 26px; }
.w37 { width: 37px; } .w43 { width: 43px; } .w50 { width: 50px; } .w53 { width: 53px; }
.w65 { width: 65px; } .w86 { width: 86px; } .w88 { width: 88px; } .w95 { width: 95px; }
.w96 { width: 96px; } .w114 { width: 114px; } .w145 { width: 145px; } .w164 { width: 164px; } .w171 { width: 171px; }

.tipped { position: relative; }
.tooltip { position: absolute; left: 22px; top: 43px; z-index: 5; width: 195px; height: 42px; padding: 3px 5px; background: #fff; border: 1px solid #555; box-shadow: 3px 3px 3px rgba(0,0,0,.35); color: #555; white-space: nowrap; }
.tooltip b, .tooltip span { display: block; }
.tooltip b { color: #444; }
.cursor { position: absolute; left: 12px; top: 23px; width: 13px; height: 19px; z-index: 6; }

.workspace { flex: 1; min-height: 0; display: flex; border-bottom: 1px solid #d2d2d2; }
.toolbox { flex: none; width: 32px; border-right: 1px solid #d2d2d2; padding: 4px 0 0 4px; display: flex; flex-direction: column; gap: 5px; }
.rule { flex: none; width: 24px; height: 3px; background: linear-gradient(#d2d2d2, #d2d2d2) center / 22px 1px no-repeat; }
.last { margin-bottom: 5px; }
.glyph { font-size: 17px; font-weight: 700; line-height: 20px; color: #333; }

.document { flex: 1; min-width: 0; display: flex; flex-direction: column; }
.tabs { flex: none; height: 21px; background: #e9e9e9; border-bottom: 1px solid #00a2f0; display: flex; }
.tabs button { height: 20px; background: #d8d8d8; padding-bottom: 2px; }
.tabs .home { width: 22px; padding: 0 0 0 1px; display: flex; align-items: center; }
.tabs .tab { width: 93px; text-align: left; padding-left: 11px; }
.tabs .active { background: #cce0ff; width: 94px; padding-left: 9px; }
.tabs .addtab { width: 22px; background: #dcdcdc; display: flex; align-items: center; justify-content: center; padding: 0; }
.hruler { flex: none; height: 18px; border-bottom: 1px solid #d2d2d2; }
.hruler svg { width: 100%; height: 17px; overflow: visible; }
.stage { flex: 1; min-height: 0; display: flex; }
.vruler { flex: none; width: 18px; border-right: 1px solid #d2d2d2; }
.vruler svg { width: 17px; height: 100%; overflow: visible; }
.hruler text, .vruler text { font: 11px "Noto Sans CJK SC", sans-serif; fill: #999; text-anchor: middle; }
.canvas { flex: 1; position: relative; background: #fff; overflow: hidden; }
.page { position: absolute; left: 530px; top: 82px; width: 458px; height: 646px; border: 1px solid #999; background: #fff; box-shadow: 5px 5px 0 #c0c0c0; }
.redstar { position: absolute; left: 618px; top: 165px; width: 56px; height: 48px; }
.vtext { position: absolute; left: 656px; top: 273px; width: 24px; font-size: 24px; font-weight: 300; line-height: 30px; word-break: break-all; }
.textframe { position: absolute; left: 581px; top: 519px; width: 275px; height: 102px; }
.textframe svg { position: absolute; width: 100%; height: 100%; overflow: visible; }
.textframe rect { fill: none; stroke: #0090f5; stroke-dasharray: 6 5; }
.textframe p { font-size: 18px; line-height: 27px; font-style: italic; color: #222; }
.vscroll { flex: none; width: 18px; background: #fff; border-right: 3px solid #eee; }
.vscroll button { width: 15px; height: 16px; display: flex; align-items: center; justify-content: center; background: #f0f0f0; }
.vscroll i { display: block; margin-top: 173px; height: 430px; background: #cdcdcd; }
.pagenav { flex: none; height: 18px; margin-left: 18px; display: flex; border-top: 1px solid #888; }
.pager { flex: none; width: 763px; display: flex; align-items: center; gap: 7px; padding-left: 3px; color: #aaa; }
.count { display: flex; gap: 4px; }
.pagetab { position: relative; width: 48px; height: 17px; margin-left: 3px; color: #111; }
.pagetab svg { position: absolute; inset: 0; overflow: visible; }
.pagetab span { position: relative; display: block; line-height: 14px; padding-right: 2px; }
.hscroll { flex: 1; display: flex; align-items: center; gap: 5px; padding-right: 5px; }
.hscroll i { flex: 1; height: 15px; background: #cdcdcd; }
.grip { flex: none; width: 5px; height: 14px; background: radial-gradient(#aaa 1px, transparent 1px) 0 0 / 3px 3px; }
.docpalette { flex: none; height: 21px; border-top: 1px solid #d2d2d2; display: flex; align-items: center; gap: 9px; padding-left: 1px; }
.docpalette .swatches { margin-left: -2px; }
.swatches { display: flex; border: 1px solid #555; border-width: 1px 0 1px 1px; }
.swatch { flex: none; width: 17px; height: 16px; border-right: 1px solid #555; }
.column { flex-direction: column; border-width: 1px 1px 0; }
.column .swatch { width: 16px; height: 17px; border-right: 0; border-bottom: 1px solid #555; }
.swatch svg { width: 100%; height: 100%; }

.docker { flex: none; width: 318px; display: flex; flex-direction: column; border-left: 3px solid #fff; box-shadow: inset 1px 0 #d2d2d2; padding-left: 2px; }
.docker h2 { flex: none; height: 23px; background: #e9e9e9; border-bottom: 1px solid #b0b0b0; padding: 0 8px 2px 6px; display: flex; align-items: center; }
.docker h2 span { margin-left: auto; display: flex; align-items: center; gap: 10px; }
.dockrow { flex: 1; min-height: 0; display: flex; }
.dockbody { flex: 1; min-width: 0; display: flex; flex-direction: column; border-right: 1px solid #00a2f0; }
.docktabs { flex: none; height: 28px; background: #e9e9e9; display: flex; align-items: center; gap: 2px; padding: 0 1px 2px; }
.docktabs .sep { height: 22px; align-self: auto; margin: 0; }
.dockmain { flex: 1; min-height: 0; display: flex; }
.panel { flex: 1; min-width: 0; }
.panelscroll { flex: none; width: 17px; background: #efefef; border-left: 1px solid #fff; padding: 5px 3px; }
.panel section { padding: 0 6px 0 4px; }
h3 { height: 20px; margin-bottom: 8px; display: flex; align-items: center; gap: 12px; padding-left: 22px; position: relative; }
.panel h3 { font-size: 14px; font-weight: 700; }
h3::before { content: ""; position: absolute; left: 5px; top: 9px; border: 4px solid transparent; border-bottom: 4px solid #777; border-top: 0; }
.mini { width: 9px; height: 9px; }
.sq { flex: none; width: 7px; height: 7px; border: 1px solid #d0d0d0; background: #fafafa; }
.row { height: 24px; margin-bottom: 5px; display: flex; align-items: center; gap: 7px; }
.tall { margin-bottom: 13px; }
.field { display: flex; align-items: center; gap: 3px; }
.color { flex: none; width: 53px; height: 24px; border: 1px solid #b0b0b0; background: linear-gradient(90deg, #fff 33px, #b0b0b0 33px, #b0b0b0 34px, #e9e9e9 34px); display: flex; align-items: center; justify-content: space-between; padding: 0 4px 0 3px; }
.color svg { margin-left: 5px; }
.select + .color, .combo + .color { margin-left: 2px; }
.ink { width: 26px; height: 16px; background: #231815; }
.black { background: #000; }
.dots { width: 16px; height: 4px; margin: 0 4px 0 auto; }
.more { display: flex; width: 100%; height: 18px; align-items: center; justify-content: center; background: #e9e9e9; margin: 7px 0; }
.first { margin-top: 15px; }
.more + section { border-top: 1px solid #e2e2e2; }
.aligns { gap: 5px; margin-bottom: 13px; }
.cell { width: 39px; padding-right: 4px; display: flex; justify-content: flex-end; }
.flush { padding-right: 0; }
.direction { display: flex; align-items: center; gap: 5px; margin: 16px 2px 0; padding: 15px 0; border-top: 1px solid #d6d6d6; }
.direction span { width: 76px; }

.dockstrip { flex: none; width: 21px; background: #e9e9e9; border-right: 1px solid #d2d2d2; }
.striptab { width: 20px; height: 73px; background: #cce0ff; display: flex; flex-direction: column; align-items: center; gap: 4px; padding-top: 3px; }
.striptab span { writing-mode: vertical-rl; text-orientation: sideways; }
.dockstrip .tb { width: 20px; }
.palette { flex: none; width: 20px; display: flex; flex-direction: column; align-items: center; gap: 8px; padding-top: 3px; }
.palette .grip { width: 14px; height: 5px; }
.palette .swatches { margin-top: -2px; }

.status { flex: none; height: 27px; display: flex; align-items: center; padding: 6px 0 0 11px; white-space: nowrap; }
.status > .ic { margin-right: 9px; }
.hint { margin-right: 29px; }
.fillinfo { margin-left: auto; width: 486px; display: flex; align-items: center; gap: 4px; padding-right: 10px; }
.pen { width: 10px; height: 18px; margin-left: 12px; }
.chip { width: 20px; height: 20px; background: #231815; }
.nofill { background: #fff; border: 1px solid #999; overflow: hidden; }
.monitor { width: 16px; height: 16px; margin-left: auto; }

.ime { position: absolute; right: 518px; bottom: 13px; width: 63px; height: 27px; border: 1px solid #888; border-radius: 4px; background: #fff; box-shadow: 0 2px 4px rgba(0,0,0,.5); display: flex; align-items: center; justify-content: center; gap: 4px; font-size: 13px; color: #333; }
.watermark { position: absolute; right: 0; bottom: 6px; width: 474px; height: 113px; background: rgba(255,255,255,.6); display: flex; }
.site { width: 276px; padding: 0 0 0 12px; }
.site strong, .site em { display: block; white-space: nowrap; }
.site strong { color: #ff2b2b; font-size: 50px; line-height: 60px; font-weight: 700; }
.site em { color: #2b80ff; font: bold 37px/52px "Liberation Serif", serif; }
.tag { width: 188px; height: 113px; border-radius: 26px; background: #2b80ff; color: #fff; font: 600 94px/108px "Noto Sans", sans-serif; text-align: center; }
.faint { position: absolute; right: 8px; bottom: 1px; display: flex; gap: 3px; opacity: .4; color: #1468c8; }
.faint svg { width: 34px; height: 40px; }
.faint b, .faint span { display: block; }
.faint b { font-size: 21px; line-height: 24px; }
.faint span { font: 17px/18px "Liberation Sans", sans-serif; }
.arrows { position: absolute; left: 0; top: 0; width: 100%; height: 100%; pointer-events: none; z-index: 8; }
.arrows > g { filter: drop-shadow(2px 3px 2px rgba(0,0,0,.5)); }
.arrows > g > path { stroke: #fe0000; stroke-width: 3; stroke-linecap: round; }
```
FILE: script.js
```js
const NS = 'http://www.w3.org/2000/svg';
const STEP = 108.65; // pixels for 50 mm at the current zoom

function add(parent, name, attrs, text) {
  const node = document.createElementNS(NS, name);
  for (const key in attrs) node.setAttribute(key, attrs[key]);
  if (text !== undefined) node.textContent = text;
  parent.appendChild(node);
  return node;
}

function drawHorizontal() {
  const svg = document.getElementById('hruler');
  const width = svg.clientWidth;
  const zero = 599;
  for (let n = -60; n < 90; n++) {
    const x = Math.round(zero + n * STEP / 10);
    if (x < 20 || x > width - 38) continue;
    if (n % 10 === 0) {
      add(svg, 'path', { d: `M${x + .5} 11V17`, stroke: '#999' });
      if (n !== 0) add(svg, 'text', { x, y: 11 }, Math.abs(n * 5));
    } else if (Math.abs(n % 10) !== 9 && Math.abs(n % 10) !== 1) {
      const tall = n % 5 === 0 ? 3 : 1;
      add(svg, 'path', { d: `M${x + .5} ${9 - tall}V9`, stroke: '#888' });
    }
  }
  add(svg, 'text', { x: width - 13, y: 11 }, '毫米');
  add(svg, 'path', { d: 'M10 5V12H14', fill: 'none', stroke: '#000', 'stroke-width': 2 });
  add(svg, 'path', { d: 'M604 1.5H874.500V14.500H604', fill: 'none', stroke: '#888' });
  add(svg, 'path', { d: 'M596.500 1V4L603 11V13H596.500V11L603 4V1zM596.500 14V17M603 14V17M596 14.500H603', fill: 'none', stroke: '#000' });
  add(svg, 'path', { d: 'M874.500 6L870.500 10.500V13.500H878.500V10.500z', fill: '#fff', stroke: '#000' });
  for (let i = 0; i < 12; i++) {
    const x = 616 + Math.round(i * 16.400);
    add(svg, 'path', { d: `M${x} 7V12M${x - 1} 11H${x + 4}`, fill: 'none', stroke: '#000', 'stroke-width': 2 });
  }
}

function drawVertical() {
  const svg = document.getElementById('vruler');
  const zero = 519;
  add(svg, 'rect', { x: 1.5, y: 519.5, width: 14, height: 101, fill: '#fff', stroke: '#888' });
  for (let n = -50; n < 30; n++) {
    const y = Math.round(zero + n * STEP / 10);
    if (y < 4 || y > svg.clientHeight - 2) continue;
    if (n > 0 && n < 10 && n !== 5) continue;
    if (n % 10 === 0) {
      add(svg, 'path', { d: `M11 ${y + .5}H16`, stroke: '#999' });
      add(svg, 'text', { transform: `translate(11 ${y}) rotate(-90)` }, Math.abs(n * 5));
    } else {
      const len = n % 5 === 0 ? 2 : 1;
      add(svg, 'path', { d: `M${16 - len} ${y + .5}H16`, stroke: '#888' });
    }
  }
}

function fillPalette(id, colors) {
  const box = document.getElementById(id);
  for (const color of colors) {
    const cell = document.createElement('span');
    cell.className = 'swatch';
    cell.style.background = color || '#fff';
    if (!color) {
      const svg = add(cell, 'svg', { viewBox: '0 0 16 16' });
      add(svg, 'path', { d: 'M3 14L14 2', stroke: '#f33', 'stroke-width': 1.2 });
    }
    box.appendChild(cell);
  }
}

drawHorizontal();
drawVertical();
fillPalette('docswatches', ['', '#fff100', '#009944', '#00a0e9', '#d7e480', '#b8c570', '#b5cbd8',
  '#d0989a', '#f5b1ce', '#d49cb5', '#000000', '#e5004f', '#e60012']);
fillPalette('swatches', ['', '#231815', '#3e3a39', '#595757', '#717071', '#888888', '#9e9f9f', '#b5b5b6',
  '#c9caca', '#dcdddd', '#efefef', '#ffffff', '#1d2088', '#00a0e9', '#009944', '#fff100', '#e60012',
  '#e4007f', '#ad4083', '#f08300', '#f4b3b3', '#897265', '#d0cce6', '#a99ccf', '#718cc7', '#7a6ab0',
  '#8f82b0', '#4f628e', '#5a4f70', '#7588a5', '#0090d9', '#9fd9f6', '#b5cbd8', '#95a9b3', '#6f7f88',
  '#48525a', '#537570', '#438a77', '#709895', '#55a896', '#5aa571', '#5cc2d0', '#4faab5', '#c0c8ba',
  '#cfe6c8', '#b4cfa8']);
```
